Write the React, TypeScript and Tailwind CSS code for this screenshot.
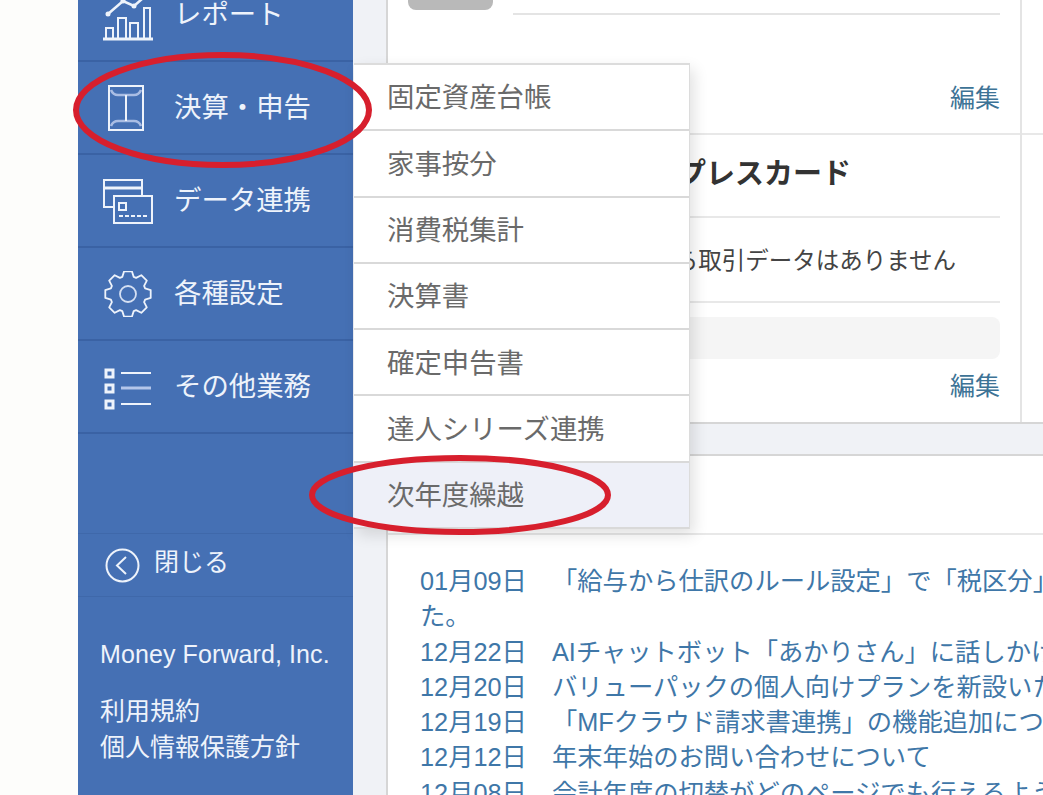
import React from 'react';

const menuItems = ['固定資産台帳', '家事按分', '消費税集計', '決算書', '確定申告書', '達人シリーズ連携', '次年度繰越'];

const news = [
  { date: '01月09日', text: '「給与から仕訳のルール設定」で「税区分」の設定ができるようになりまし' },
  { date: '', text: 'た。' },
  { date: '12月22日', text: 'AIチャットボット「あかりさん」に話しかけてみましょう' },
  { date: '12月20日', text: 'バリューパックの個人向けプランを新設いたしました' },
  { date: '12月19日', text: '「MFクラウド請求書連携」の機能追加について' },
  { date: '12月12日', text: '年末年始のお問い合わせについて' },
  { date: '12月08日', text: '会計年度の切替がどのページでも行えるようになりました' },
];

// 8 teeth, outer radius 23, root radius 18
function gearPoints() {
  const pts: string[] = [];
  for (let i = 0; i < 8; i++) {
    const a = (i * Math.PI) / 4 - Math.PI / 2;
    const offsets: [number, number][] = [
      [-0.32, 18],
      [-0.17, 23],
      [0.17, 23],
      [0.32, 18],
    ];
    offsets.forEach(([d, r]) => {
      pts.push(`${(24 + r * Math.cos(a + d)).toFixed(1)},${(23 + r * Math.sin(a + d)).toFixed(1)}`);
    });
  }
  return pts.join(' ');
}

function ReportIcon() {
  return (
    <svg className="mt-[10px] overflow-visible" width="50" height="42" viewBox="0 0 50 42" fill="none" stroke="#eef3fb" strokeWidth="2">
      <path d="M0 40h50" strokeWidth="3" />
      <path d="M3 39V29h7v10M15 39V19h8v20M27 39V24h8v15M41 39V9h6v30" />
      <path d="M5 15 20 2l11 5 8-7" strokeWidth="2.5" />
      <circle cx="5" cy="15" r="1.5" fill="#eef3fb" />
      <circle cx="20" cy="2" r="1.5" fill="#eef3fb" />
      <circle cx="31" cy="7" r="1.5" fill="#eef3fb" />
    </svg>
  );
}

function EnvelopeIcon() {
  return (
    <svg className="-ml-[3px]" width="38" height="48" viewBox="0 0 38 48" fill="none" stroke="#eef3fb" strokeWidth="2">
      <rect x="2" y="2" width="34" height="44" />
      <path d="M4 6q2 5 7 5h16q5 0 7-5M4 42q2-5 7-5h16q5 0 7 5" stroke="#a9bde4" strokeWidth="2.5" />
      <path d="M19 11v26" />
    </svg>
  );
}

function CardIcon() {
  return (
    <svg width="50" height="46" viewBox="0 0 50 46" fill="none" stroke="#eef3fb" strokeWidth="2">
      <path d="M11 29H1V2h38v16" />
      <path d="M1 10h38" strokeWidth="3" />
      <rect x="11" y="18" width="38" height="27" />
      <rect x="16" y="25" width="7" height="7" />
      <path d="M16 38h30" strokeDasharray="4 2" />
    </svg>
  );
}

function GearIcon() {
  return (
    <svg width="48" height="46" viewBox="0 0 48 46" fill="none" stroke="#eef3fb" strokeWidth="1.8">
      <circle cx="24" cy="23" r="8" stroke="#d5e0f3" />
      <polygon points={gearPoints()} strokeLinejoin="round" />
    </svg>
  );
}

function ListIcon() {
  return (
    <svg className="mt-[4px]" width="48" height="42" viewBox="0 0 48 42" fill="none" stroke="#eef3fb" strokeWidth="2">
      <rect x="2" y="2" width="7" height="7" strokeWidth="3" />
      <rect x="2" y="17" width="7" height="7" strokeWidth="3" />
      <rect x="2" y="33" width="7" height="7" strokeWidth="3" />
      <path d="M17 5h30M17 36h30" />
      <path d="M17 20h30" stroke="#b4c6ea" strokeWidth="3" />
    </svg>
  );
}

function NavItem({ icon, label }: { icon: React.ReactNode; label: string }) {
  return (
    <div className="flex h-[93px] items-center border-b-2 border-[#3a62a4]">
      <div className="flex w-[96px] justify-center pl-[3px]">{icon}</div>
      <span className="pt-[1px] text-[27.4px] leading-none text-[#eef3fb]">{label}</span>
    </div>
  );
}

export default function App() {
  return (
    <div
      className="relative flex h-[795px] w-[1043px] overflow-hidden bg-white"
      style={{ fontFamily: '"Liberation Sans", "Noto Sans CJK JP", sans-serif' }}
    >
      <div className="w-[78px] shrink-0 bg-[#fdfdfb]" />

      <aside className="-mt-[31px] flex h-[826px] w-[275px] shrink-0 flex-col bg-[#4570b4]">
        <NavItem icon={<ReportIcon />} label="レポート" />
        <NavItem icon={<EnvelopeIcon />} label="決算・申告" />
        <NavItem icon={<CardIcon />} label="データ連携" />
        <NavItem icon={<GearIcon />} label="各種設定" />
        <NavItem icon={<ListIcon />} label="その他業務" />
        <div className="h-[100px] border-b border-[#3f68aa]" />
        <div className="flex h-[63px] items-center gap-[14px] border-b border-[#3f68aa] pl-[27px]">
          <svg width="35" height="35" viewBox="0 0 35 35" fill="none" stroke="#eef3fb" strokeWidth="2">
            <circle cx="17.5" cy="17.5" r="16" />
            <path d="M21 9l-9 8.5 9 8.5" />
          </svg>
          <span className="pb-[5px] text-[25px] leading-none text-[#eef3fb]">閉じる</span>
        </div>
        <div className="px-[22px] pt-[45px] text-[#eef3fb]">
          <p className="text-[25px] leading-none tracking-[0.1px] whitespace-nowrap">Money Forward, Inc.</p>
          <p className="mt-[26px] text-[25px] leading-[36px]">利用規約</p>
          <p className="text-[25px] leading-[36px]">個人情報保護方針</p>
        </div>
      </aside>

      <main className="flex min-w-0 flex-1 flex-col bg-[#f0f2f6] pl-[33px]">
        <section className="flex h-[424px] shrink-0 border-b-2 border-l-2 border-[#d6d6d6] bg-white">
          <div className="w-[634px] shrink-0 border-r-2 border-[#e4e4e4]">
            <div className="h-[135px] border-b-2 border-[#e8e8e8] px-[20px]">
              <div className="flex">
                <div className="h-[10px] w-[85px] rounded-b-lg bg-[#b9b9b9]" />
                <div className="ml-[20px] mt-[13px] h-[2px] flex-1 bg-[#e4e4e4]" />
              </div>
              <p className="mt-[61px] pt-[10px] text-right text-[25px] leading-none text-[#3d7396]">編集</p>
            </div>
            <div className="px-[20px]">
              <div className="flex h-[83px] items-center justify-end border-b-2 border-[#e8e8e8] pb-[3px] pr-[149px]">
                <h2 className="text-[29px] font-bold whitespace-nowrap leading-none text-[#333333]">アメリカン・エキスプレスカード</h2>
              </div>
              <div className="flex h-[85px] items-center justify-end border-b-2 border-[#e8e8e8] pr-[44px] pt-[4px]">
                <p className="text-[23.5px] whitespace-nowrap leading-none text-[#444444]">この口座から取引データはありません</p>
              </div>
              <div className="mt-[14px] h-[42px] rounded-lg bg-[#f5f5f5]" />
              <p className="mt-[15px] text-right text-[25px] leading-none text-[#3d7396]">編集</p>
            </div>
          </div>
          <div className="flex-1">
            <div className="h-[135px] border-b-2 border-[#e8e8e8]" />
          </div>
        </section>

        <section className="mt-[30px] flex-1 border-t-2 border-l-2 border-[#d6d6d6] bg-white">
          <div className="h-[79px] border-b-2 border-[#e8e8e8]" />
          <div className="overflow-hidden pl-[32px] pt-[29px] text-[25.3px] leading-[35.3px] whitespace-nowrap text-[#3f77a8]">
            {news.map((item) => (
              <div key={item.date + item.text} className="flex">
                {item.date && <span className="w-[132px] shrink-0">{item.date}</span>}
                <span>{item.text}</span>
              </div>
            ))}
          </div>
        </section>
      </main>

      <nav className="absolute left-[354px] top-[63px] w-[336px] border-t-2 border-r border-[#dcdcdc] bg-white shadow-[4px_6px_14px_rgba(0,0,0,0.12)]">
        {menuItems.map((label, i) => (
          <div
            key={label}
            className={
              i === menuItems.length - 1
                ? 'flex h-[66.3px] items-center border-b-2 border-[#d9d9d9] bg-[#eef0f8] pl-[33px] pt-[2px] text-[27.4px] leading-none text-[#6a6a6a]'
                : 'flex h-[66.3px] items-center border-b-2 border-[#d9d9d9] pl-[33px] pt-[2px] text-[27.4px] leading-none text-[#6a6a6a]'
            }
          >
            {label}
          </div>
        ))}
      </nav>

      <svg className="pointer-events-none absolute left-0 top-0" width="1043" height="795" fill="none" stroke="#d71f2d" strokeWidth="6">
        <ellipse cx="222.5" cy="110" rx="146.5" ry="55" />
        <ellipse cx="460" cy="495" rx="148" ry="37" />
      </svg>
    </div>
  );
}
